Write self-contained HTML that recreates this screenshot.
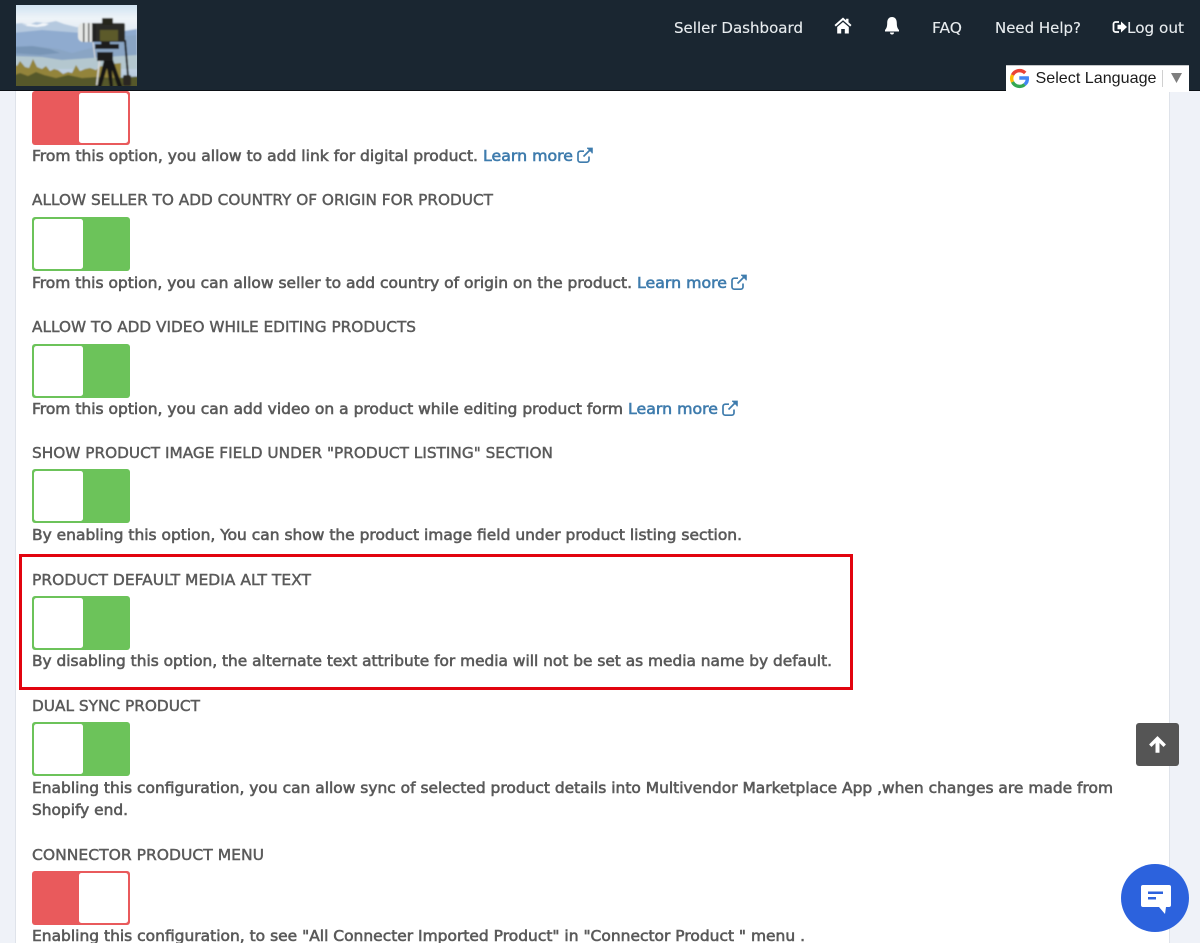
<!DOCTYPE html>
<html><head><meta charset="utf-8"><title>Settings</title>
<style>
html,body{margin:0;padding:0;width:1200px;height:943px;overflow:hidden;background:#eff2f8}
svg{display:block}
text{font-family:"DejaVu Sans","Liberation Sans",sans-serif;white-space:pre}
.b{font-size:15.5px;fill:#5a5a5a;stroke:#5a5a5a;stroke-width:.6px}
.h{font-size:15.5px;fill:#5a5a5a;stroke:#5a5a5a;stroke-width:.45px}
.l{font-size:15.5px;fill:#3f7cad;stroke:#3f7cad;stroke-width:.6px}
.n{font-size:15.5px;fill:#e8ecef;stroke:#e8ecef;stroke-width:.12px}
.g{font-family:"Liberation Sans",sans-serif;font-size:16px;fill:#1b1b1b}
</style></head><body>
<svg width="1200" height="943" viewBox="0 0 1200 943" xmlns="http://www.w3.org/2000/svg">
<defs>
<linearGradient id="sky" x1="0" y1="0" x2="0" y2="1"><stop offset="0" stop-color="#c9def0"/><stop offset=".18" stop-color="#eef4f8"/><stop offset=".3" stop-color="#e4ecf4"/><stop offset="1" stop-color="#a9bfd6"/></linearGradient>
<filter id="soft" x="-5%" y="-5%" width="110%" height="110%"><feGaussianBlur stdDeviation=".7"/></filter>
<clipPath id="lc"><rect x="16" y="5" width="121" height="81"/></clipPath>
<g id="on"><rect x="0" y="0" width="98" height="54" rx="3" fill="#6cc35a"/><rect x="2" y="2" width="49" height="50" rx="2.500" fill="#fff"/></g>
<g id="off"><rect x="0" y="0" width="98" height="54" rx="3" fill="#e95a5c"/><rect x="47" y="2" width="49" height="50" rx="2.500" fill="#fff"/></g>
<g id="ext" fill="none" stroke="#3f7cad" stroke-width="1.700"><path d="M12 9.500v3.500a2.200 2.200 0 0 1-2.200 2.200H3.200A2.200 2.200 0 0 1 1 13V6.400a2.200 2.200 0 0 1 2.200-2.200H7"/><path d="M6.500 9.500 14 2"/><path d="M10 1.200h5.200v5.200" fill="#3f7cad" stroke-width="1.200"/></g>
</defs>

<rect x="0" y="0" width="1200" height="943" fill="#eff2f8"/>
<rect x="15" y="80" width="1155" height="863" fill="#dfe3ea"/>
<rect x="16" y="80" width="1153" height="863" fill="#fff"/>

<!-- toggles -->
<use href="#off" x="32" y="91"/>
<use href="#on" x="32" y="217"/>
<use href="#on" x="32" y="344"/>
<use href="#on" x="32" y="469"/>
<use href="#on" x="32" y="596"/>
<use href="#on" x="32" y="722"/>
<use href="#off" x="32" y="871"/>

<!-- text -->
<text class="b" x="32" y="161" textLength="446" lengthAdjust="spacingAndGlyphs">From this option, you allow to add link for digital product.</text>
<text class="l" x="483" y="161" textLength="90" lengthAdjust="spacingAndGlyphs">Learn more</text>
<use href="#ext" x="577" y="147"/>

<text class="h" x="32" y="205" textLength="461" lengthAdjust="spacingAndGlyphs">ALLOW SELLER TO ADD COUNTRY OF ORIGIN FOR PRODUCT</text>
<text class="b" x="32" y="288" textLength="600" lengthAdjust="spacingAndGlyphs">From this option, you can allow seller to add country of origin on the product.</text>
<text class="l" x="637" y="288" textLength="90" lengthAdjust="spacingAndGlyphs">Learn more</text>
<use href="#ext" x="731" y="274"/>

<text class="h" x="32" y="332" textLength="384" lengthAdjust="spacingAndGlyphs">ALLOW TO ADD VIDEO WHILE EDITING PRODUCTS</text>
<text class="b" x="32" y="414" textLength="591" lengthAdjust="spacingAndGlyphs">From this option, you can add video on a product while editing product form</text>
<text class="l" x="628" y="414" textLength="90" lengthAdjust="spacingAndGlyphs">Learn more</text>
<use href="#ext" x="722" y="400"/>

<text class="h" x="32" y="458" textLength="521" lengthAdjust="spacingAndGlyphs">SHOW PRODUCT IMAGE FIELD UNDER "PRODUCT LISTING" SECTION</text>
<text class="b" x="32" y="540" textLength="710" lengthAdjust="spacingAndGlyphs">By enabling this option, You can show the product image field under product listing section.</text>

<text class="h" x="32" y="585" textLength="279" lengthAdjust="spacingAndGlyphs">PRODUCT DEFAULT MEDIA ALT TEXT</text>
<text class="b" x="32" y="666" textLength="800" lengthAdjust="spacingAndGlyphs">By disabling this option, the alternate text attribute for media will not be set as media name by default.</text>

<text class="h" x="32" y="711" textLength="168" lengthAdjust="spacingAndGlyphs">DUAL SYNC PRODUCT</text>
<text class="b" x="32" y="793" textLength="1081" lengthAdjust="spacingAndGlyphs">Enabling this configuration, you can allow sync of selected product details into Multivendor Marketplace App ,when changes are made from</text>
<text class="b" x="32" y="815" textLength="96" lengthAdjust="spacingAndGlyphs">Shopify end.</text>

<text class="h" x="32" y="860" textLength="232" lengthAdjust="spacingAndGlyphs">CONNECTOR PRODUCT MENU</text>
<text class="b" x="32" y="941" textLength="773" lengthAdjust="spacingAndGlyphs">Enabling this configuration, to see "All Connecter Imported Product" in "Connector Product " menu .</text>

<!-- highlight -->
<rect x="20.500" y="555.500" width="831" height="133" fill="none" stroke="#e2040f" stroke-width="3"/>

<!-- header -->
<rect x="0" y="0" width="1200" height="90" fill="#1a2631"/>
<rect x="0" y="90" width="1200" height="1" fill="#0c1116"/>

<!-- logo -->
<g clip-path="url(#lc)">
<g filter="url(#soft)">
<rect x="12" y="2" width="130" height="90" fill="url(#sky)"/>
<path d="M12 24l10-1 6 2 8-3 10 1 10-2 8 3 12 3 20 2v14H12z" fill="#b5c9df"/>
<path d="M20 23l6 2 5-1 6 1 6-2 6 1-4 2-8 1-10-1z" fill="#f2f6fa"/>
<path d="M12 33l30-3 40 3 30 0 25-4v24H12z" fill="#8fabcf"/>
<path d="M12 48l22-2 24 3 14 4 30-8 22-9 13-1v26H12z" fill="#8aa5c4"/>
<path d="M12 47l20-1 18 3 10 4-20 2-28-2z" fill="#7895b6"/>
<path d="M12 56l30 1 20 3 75-5v14H12z" fill="#b4c7cf"/>
<path d="M12 92V63l5 3 3-5 5 6 4 1 4-9 4 8 5 2 4-3 4 5 4-2 4 1 5 4 5-2 4 1 4-8 4 6 5-2 5-1 6 2 5-4 5 1 5-3 10-1v35z" fill="#93843a"/>
<path d="M12 92v-16l8-3 8 3 8-4 8 3 12 3 12-3 14 3 15-1 20 1 25-2v19z" fill="#57592b"/>
<!-- tripod -->
<path d="M104 60l-7 28h4l6-20 3 20h3l-1-18 6 18h5l-10-28z" fill="#141416"/>
<path d="M99 57l-3 28h1.500l3-26z" fill="#d8d8d8"/>
<rect x="97" y="52" width="16" height="9" fill="#1c1c1c"/>
<rect x="95" y="44" width="24" height="5" fill="#1e1e1e"/>
<rect x="101" y="41" width="9" height="4" fill="#1c1c1c"/>
<!-- strap -->
<path d="M125 40l3 36" stroke="#141414" stroke-width="2" fill="none"/>
<rect x="123" y="75" width="8" height="11" rx="2" fill="#2a2822"/>
<path d="M93 42l2 16" stroke="#ddd" stroke-width="1" fill="none"/>
<!-- camera -->
<rect x="95" y="23" width="30" height="19" rx="2" fill="#2c2b26"/>
<rect x="102" y="18" width="11" height="7" rx="1" fill="#26251f"/>
<rect x="100" y="30" width="18" height="11" fill="#5c5a2c"/>
<rect x="78" y="23" width="18" height="19" rx="5" fill="#e6e8e6"/>
<rect x="83" y="23" width="1.500" height="19" fill="#444"/>
<rect x="88" y="23" width="1.500" height="19" fill="#555"/>
<rect x="92" y="23" width="4" height="19" fill="#222"/>
</g>
</g>

<!-- nav -->
<text class="n" x="674" y="33" textLength="129" lengthAdjust="spacingAndGlyphs">Seller Dashboard</text>
<path d="M843 17.500 834.500 25l1.300 1.500L843 20.300l7.200 6.200 1.300-1.500-3-2.700v-3.500h-2.400v1.400z" fill="#fff"/>
<path d="M843 22l-5.800 5v6.500h4v-4.500h3.600v4.500h4V27z" fill="#fff"/>
<path d="M892 17c3.300 0 4.800 2.600 4.800 6 0 3.500.7 5.500 2.200 7v1.500h-14V30c1.500-1.500 2.200-3.500 2.200-7 0-3.400 1.500-6 4.800-6z" fill="#fff"/>
<path d="M890 32.500h4a2 2 0 0 1-4 0z" fill="#fff"/>
<text class="n" x="932" y="33" textLength="30" lengthAdjust="spacingAndGlyphs">FAQ</text>
<text class="n" x="995" y="33" textLength="86" lengthAdjust="spacingAndGlyphs">Need Help?</text>
<path d="M1119 22h-3.500a2 2 0 0 0-2 2v6a2 2 0 0 0 2 2h3.500" fill="none" stroke="#fff" stroke-width="1.800"/>
<path d="M1117.500 24.800h3.500v-3.300l6 5.500-6 5.500v-3.300h-3.500z" fill="#fff"/>
<text class="n" x="1127" y="33" textLength="57" lengthAdjust="spacingAndGlyphs">Log out</text>

<!-- language -->
<rect x="1006" y="65" width="183" height="27" fill="#fff"/>
<rect x="1006" y="65" width="183" height="1" fill="#c4c6c8"/>
<g fill="none" stroke-width="3.400">
<path d="M1025.200 73a7.900 7.900 0 0 0-12.700 2" stroke="#ea4335"/>
<path d="M1012.500 75a8 8 0 0 0 0 7" stroke="#fbbc05"/>
<path d="M1012.500 82a7.900 7.900 0 0 0 12.200 2.500" stroke="#34a853"/>
<path d="M1024.700 84.500a7.500 7.500 0 0 0 2.600-6.500h-8" stroke="#4285f4"/>
</g>
<text class="g" x="1035.500" y="83" textLength="121" lengthAdjust="spacingAndGlyphs">Select Language</text>
<rect x="1162" y="70" width="1" height="17" fill="#d0d0d0"/>
<path d="M1171 73h11l-5.500 10z" fill="#7e7e7e"/>

<!-- scroll top -->
<rect x="1136" y="723" width="43" height="43" rx="3" fill="#555"/>
<path d="M1157.500 736.500l8 8-2 2-4.300-4.200v10.200h-3.400v-10.200l-4.300 4.200-2-2z" fill="#fff" stroke="#fff" stroke-width=".6" stroke-linejoin="round"/>

<!-- chat -->
<circle cx="1155" cy="898" r="34" fill="#2c62dd"/>
<path d="M1143 885h26a2 2 0 0 1 2 2v18a2 2 0 0 1-2 2h-3l-1 7-6-7h-16a2 2 0 0 1-2-2v-18a2 2 0 0 1 2-2z" fill="#fff"/>
<rect x="1148" y="891.500" width="15" height="2.500" fill="#2c62dd"/>
<rect x="1148" y="897" width="8" height="2.500" fill="#2c62dd"/>
</svg>
</body></html>
